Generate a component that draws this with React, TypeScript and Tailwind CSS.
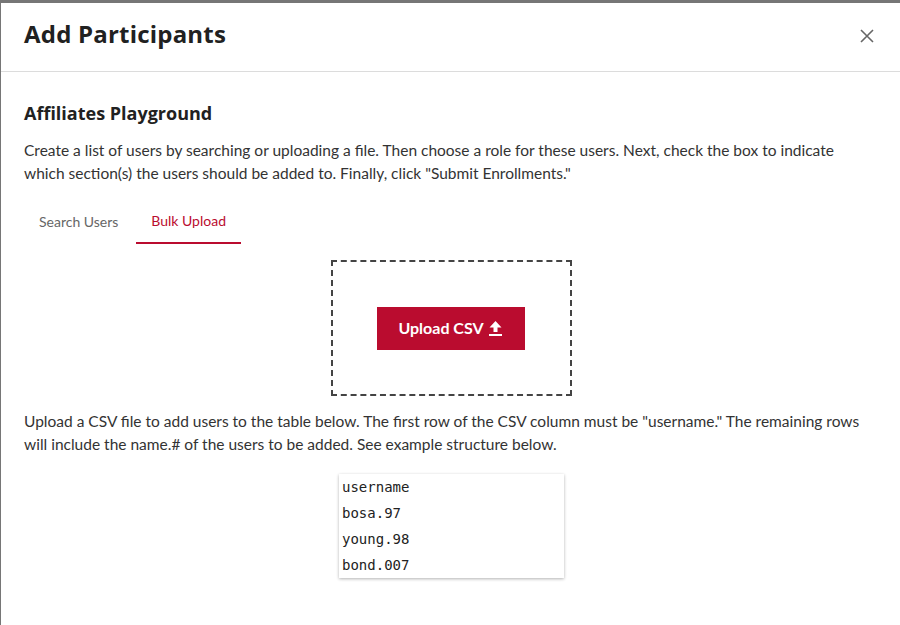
import React from "react";

export default function App() {
  return (
    <div className="w-[900px] h-[625px] bg-[#767676] pt-[3px] pl-[1px] overflow-hidden" style={{ fontFamily: "Lato, 'Open Sans', sans-serif" }}>
      <div className="bg-white w-full h-full">
        <div className="h-[69px] flex items-center justify-between pl-[23px] pr-[26px] border-b border-[#dcdcdc]">
          <h1 className="text-[24px] font-bold text-[#212121] leading-none -mt-[6px] tracking-[0.2px]" style={{ fontFamily: "'Open Sans', sans-serif" }}>Add Participants</h1>
          <svg width="14" height="14" viewBox="0 0 14 14" className="text-[#666] -mt-[2px]">
            <path d="M1 1L13 13M13 1L1 13" stroke="currentColor" strokeWidth="1.6" />
          </svg>
        </div>
        <div className="pl-[23px] pr-[24px]">
          <h2 className="mt-[29px] text-[18px] font-bold text-[#212121] leading-[24px]" style={{ fontFamily: "'Open Sans', sans-serif" }}>Affiliates Playground</h2>
          <p className="mt-[14px] text-[15.5px] text-[#333] leading-[23px]">
            Create a list of users by searching or uploading a file. Then choose a role for these users. Next, check the box to indicate which section(s) the users should be added to. Finally, click "Submit Enrollments."
          </p>
          <div className="mt-[17px] flex gap-[3px] text-[14px]">
            <div className="px-[15px] h-[42px] flex items-center pb-[4px] text-[#666]">Search Users</div>
            <div className="px-[15px] h-[42px] flex items-center pb-[4px] text-[#ba0c2f] border-b-2 border-[#ba0c2f]">Bulk Upload</div>
          </div>
          <div className="mt-[16px] flex justify-center">
            <div className="w-[241px] h-[136px] border-2 border-dashed border-[#444] flex items-center justify-center ml-[2px]">
              <button className="w-[148px] h-[43px] bg-[#ba0c2f] text-white font-bold text-[16px] flex items-center justify-center gap-[5px] pr-[2px]">
                Upload CSV
                <svg width="13" height="15" viewBox="0 0 13 15">
                  <path d="M6.5 0L12.5 6.5H8.5V11H4.5V6.5H0.5Z" fill="white" />
                  <rect x="0" y="13" width="13" height="2" fill="white" />
                </svg>
              </button>
            </div>
          </div>
          <p className="mt-[14px] text-[15.5px] text-[#333] leading-[23px]">
            Upload a CSV file to add users to the table below. The first row of the CSV column must be "username." The remaining rows will include the name.# of the users to be added. See example structure below.
          </p>
          <div className="mt-[18px] flex justify-center">
            <div className="w-[225px] ml-[3px] bg-white shadow-[0_1px_3px_rgba(0,0,0,0.3)] text-[14px] text-[#222]" style={{ fontFamily: "'DejaVu Sans Mono', monospace" }}>
              {["username", "bosa.97", "young.98", "bond.007"].map((r) => (
                <div key={r} className="h-[26px] flex items-center px-[3px] pt-[1px]">{r}</div>
              ))}
            </div>
          </div>
        </div>
      </div>
    </div>
  );
}
